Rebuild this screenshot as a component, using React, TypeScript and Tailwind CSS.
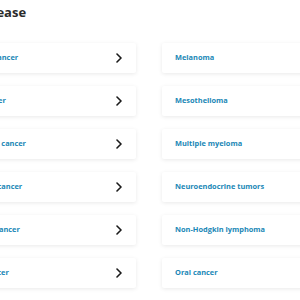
import React from "react";

const left = [
  "Colorectal cancer",
  "Kidney cancer",
  "Endometrial cancer",
  "Esophageal cancer",
  "Pancreatic cancer",
  "Thyroid cancer",
];

const right = [
  "Melanoma",
  "Mesothelioma",
  "Multiple myeloma",
  "Neuroendocrine tumors",
  "Non-Hodgkin lymphoma",
  "Oral cancer",
];

function Card({ label, arrow }: { label: string; arrow?: boolean }) {
  return (
    <div
      className={`h-[30px] bg-white rounded-[2px] shadow-[0_1px_4px_rgba(0,0,0,0.09)] flex items-center justify-between pr-[13px] ${
        arrow ? "pl-[18px]" : "pl-[13px]"
      }`}
    >
      <span className="text-[7.4px] font-bold text-[#1a87b6] whitespace-nowrap">{label}</span>
      {arrow && (
        <svg width="8" height="10" viewBox="0 0 8 10" fill="none">
          <path d="M2 1l4 4-4 4" stroke="#1a1a1a" strokeWidth="1.6" strokeLinecap="round" strokeLinejoin="round" />
        </svg>
      )}
    </div>
  );
}

export default function App() {
  return (
    <div className="w-[300px] h-[300px] overflow-hidden bg-white" style={{ fontFamily: "'Open Sans', sans-serif" }}>
      <div className="ml-[-64px] pt-[2px]">
        <h2 className="text-[13px] font-bold text-[#2b2b2b] leading-[20px] ml-[-30px] whitespace-nowrap">Browse by Disease</h2>
        <div className="grid grid-cols-[200px_200px] gap-x-[26px] gap-y-[13px] mt-[21px]">
          {left.map((l, i) => (
            <React.Fragment key={i}>
              <Card label={l} arrow />
              <Card label={right[i]} />
            </React.Fragment>
          ))}
        </div>
      </div>
    </div>
  );
}
